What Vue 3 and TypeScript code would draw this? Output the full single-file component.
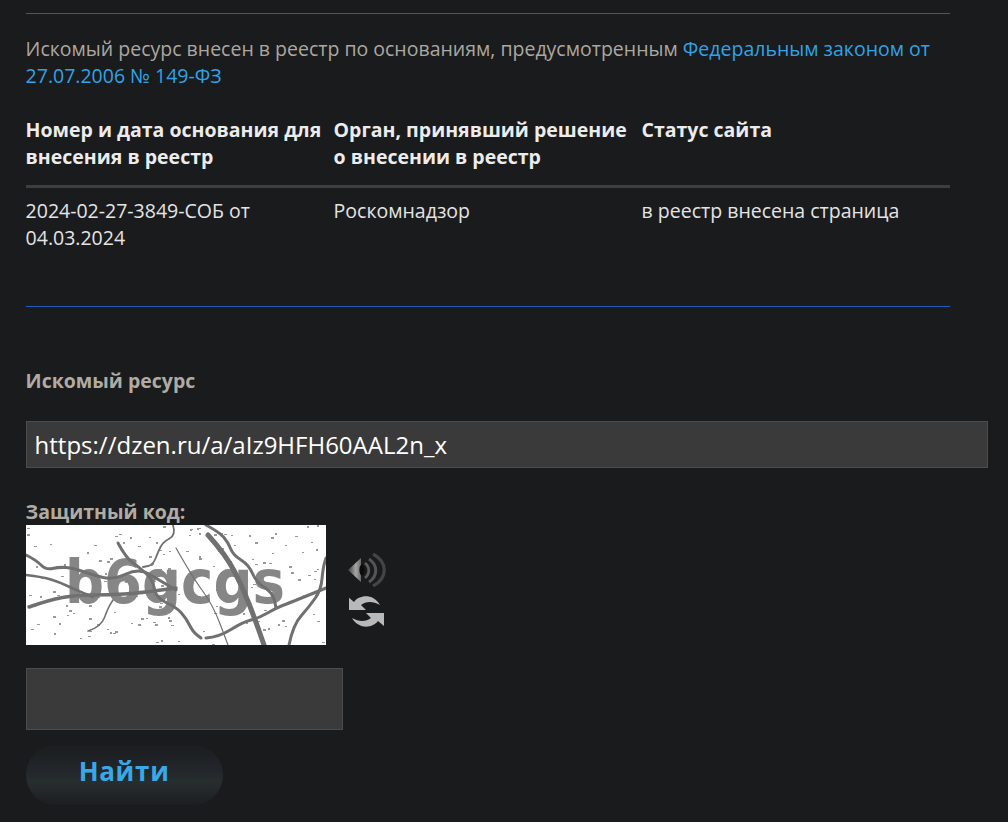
<script setup lang="ts">
import { ref } from 'vue';

type Point = [number, number];

interface Speck {
  x: number;
  y: number;
  w: number;
  h: number;
}

const resource = ref('https://dzen.ru/a/aIz9HFH60AAL2n_x');
const code = ref('');

// captcha noise, seeded so every render looks the same
let seed = 7;
const rnd = () => {
  seed += 1;
  const v = Math.sin(seed * 127.1) * 43758.5453;
  return v - Math.floor(v);
};
const specks: Speck[] = Array.from({ length: 170 }, () => ({
  x: Math.floor(rnd() * 300),
  y: Math.floor(rnd() * 120),
  w: 2 + Math.floor(rnd() * 2),
  h: 1 + Math.floor(rnd() * 2),
}));

// rounds the corners of a hand-traced curve
const smooth = (pts: Point[]) => {
  let d = `M${pts[0][0]} ${pts[0][1]}`;
  for (let i = 1; i < pts.length - 1; i++) {
    const mx = (pts[i][0] + pts[i + 1][0]) / 2;
    const my = (pts[i][1] + pts[i + 1][1]) / 2;
    d += `Q${pts[i][0]} ${pts[i][1]} ${mx} ${my}`;
  }
  const last = pts[pts.length - 1];
  return `${d}L${last[0]} ${last[1]}`;
};

const lines = [
  { w: 3, pts: [[0, 30], [10, 35], [20, 45], [33, 42], [47, 43], [67, 50], [87, 55], [113, 43], [133, 55], [150, 65]] },
  { w: 2.5, pts: [[0, 50], [17, 52], [33, 57], [50, 65], [67, 72]] },
  { w: 3.5, pts: [[3, 82], [23, 75], [50, 70], [83, 70], [113, 68], [150, 63]] },
  { w: 3, pts: [[92, 18], [100, 33], [113, 42], [127, 55], [130, 73], [150, 82], [160, 93], [167, 107], [175, 113]] },
  { w: 1.5, pts: [[62, 106], [75, 102], [82, 83], [87, 75]] },
  { w: 1.8, pts: [[147, 0], [150, 10], [137, 17], [132, 27], [127, 40], [117, 42]] },
  { w: 5, pts: [[182, 10], [200, 30], [217, 63], [230, 97], [238, 120]] },
  { w: 3, pts: [[180, 0], [193, 7], [202, 17], [207, 30], [223, 40], [230, 57], [247, 68], [250, 83]] },
  { w: 1.2, pts: [[150, 23], [167, 53], [187, 80], [202, 120]] },
  { w: 3, pts: [[180, 113], [193, 112], [217, 97], [233, 93], [250, 83], [263, 78], [283, 70], [300, 63]] },
  { w: 3, pts: [[263, 120], [267, 100], [283, 82], [295, 65], [297, 43], [300, 33]] },
].map((l) => ({ w: l.w, d: smooth(l.pts as Point[]) }));
</script>

<template>
  <main class="page">
    <hr class="rule" />

    <p class="intro">
      Искомый ресурс внесен в реестр по основаниям, предусмотренным
      <a href="#" class="link">Федеральным законом от 27.07.2006 № 149-ФЗ</a>
    </p>

    <table class="result">
      <thead>
        <tr>
          <th>Номер и дата основания для внесения в реестр</th>
          <th>Орган, принявший решение о внесении в реестр</th>
          <th>Статус сайта</th>
        </tr>
      </thead>
      <tbody>
        <tr>
          <td>2024-02-27-3849-СОБ от 04.03.2024</td>
          <td>Роскомнадзор</td>
          <td>в реестр внесена страница</td>
        </tr>
      </tbody>
    </table>

    <hr class="rule" />

    <form class="search" @submit.prevent>
      <label class="label" for="resource">Искомый ресурс</label>
      <input id="resource" v-model="resource" class="field field-wide" type="text" />

      <label class="label label-code" for="code">Защитный код:</label>
      <div class="captcha-row">
        <svg class="captcha" viewBox="0 0 300 120" width="300" height="120">
          <rect width="300" height="120" fill="#fff" />
          <g class="captcha-noise">
            <rect
              v-for="(s, i) in specks"
              :key="i"
              :x="s.x"
              :y="s.y"
              :width="s.w"
              :height="s.h"
              fill="#999"
            />
            <text x="39" y="78" class="captcha-word" textLength="220" lengthAdjust="spacingAndGlyphs">b6gcgs</text>
            <path
              v-for="(line, i) in lines"
              :key="'l' + i"
              :d="line.d"
              :stroke-width="line.w"
              fill="none"
              stroke="#707070"
              stroke-linecap="round"
              stroke-linejoin="round"
            />
          </g>
        </svg>

        <div class="captcha-tools">
          <svg class="tool" viewBox="0 0 40 34" width="40" height="34" aria-label="Прослушать">
            <defs>
              <linearGradient id="cone" x1="0" y1="0" x2="1" y2="0">
                <stop offset="0" stop-color="#3c3c3c" />
                <stop offset="0.6" stop-color="#a6a6a6" />
                <stop offset="1" stop-color="#6a6a6a" />
              </linearGradient>
            </defs>
            <path d="M1 17 L14 5 V29 Z" fill="url(#cone)" />
            <ellipse cx="15" cy="17" rx="2.6" ry="5.5" fill="#0c0c0c" />
            <path d="M18 10C23 14 23 21 18 25" fill="none" stroke="#5f5f5f" stroke-width="2.6" />
            <path d="M22 6C31 12 31 23 22 29" fill="none" stroke="#555" stroke-width="3" />
            <path d="M26 1C41 9 41 25 26 33" fill="none" stroke="#454545" stroke-width="3.2" />
          </svg>
          <svg class="tool" viewBox="4 3 36 36" width="36" height="36" aria-label="Обновить">
            <path d="M3 7 L9 12 C14 5 28 3 35 15 C28 11 21 11 16 15 L21 20 H3 Z" fill="#b9b9b9" />
            <path d="M3 7 L9 12 C14 5 28 3 35 15 C28 11 21 11 16 15 L21 20 H3 Z" fill="#b9b9b9" transform="rotate(180 21 21.5)" />
          </svg>
        </div>
      </div>

      <input id="code" v-model="code" class="field field-code" type="text" />

      <button class="submit" type="submit">Найти</button>
    </form>
  </main>
</template>

<style>
html,
body {
  background: #1a1b1d;
}
</style>

<style scoped>
.page {
  box-sizing: border-box;
  width: 1008px;
  height: 822px;
  overflow: hidden;
  padding: 13px 0 0 25.6px;
  font-family: "Open Sans", "Noto Sans", sans-serif;
  font-size: 19.5px;
  line-height: 27px;
  color: #e4e4e4;
  background: #1a1b1d;
}

.rule {
  width: 924px;
  height: 1px;
  margin: 0;
  border: 0;
  background: #1f5fbb;
}

.intro {
  width: 924px;
  margin: 21px 0 0;
  color: #aca8a0;
}

.link {
  color: #2fa3e6;
  text-decoration: none;
}

.result {
  width: 924px;
  margin-top: 27px;
  border-collapse: collapse;
  table-layout: fixed;
}

.result th,
.result td {
  padding: 0 12px 0 0;
  text-align: left;
  vertical-align: top;
}

.result th {
  padding-bottom: 15px;
  border-bottom: 3px solid #3d3e40;
  font-weight: 700;
  color: #ececec;
}

.result td {
  padding-top: 9px;
  padding-bottom: 55px;
  color: #e4e4e4;
}

.search {
  display: flex;
  flex-direction: column;
  align-items: flex-start;
}

.label {
  font-weight: 700;
  color: #b1aca3;
}

.search > .label:first-child {
  margin-top: 60px;
}

.label-code {
  margin-top: 30px;
  line-height: 27px;
  height: 27px;
}

.field {
  box-sizing: border-box;
  border: 1px solid #4c4c4c;
  background: #3a3a3a;
  color: #fff;
  font-family: inherit;
  outline: none;
}

.field-wide {
  width: 962px;
  height: 47px;
  margin-top: 27px;
  padding: 0 8px;
  font-size: 24px;
}

.field-code {
  width: 317px;
  height: 62px;
  margin-top: 23px;
}

.captcha-row {
  display: flex;
  align-items: flex-start;
  gap: 21px;
}

.captcha {
  display: block;
}

.captcha-noise {
  filter: blur(0.4px);
}

.captcha-word {
  font-family: "DejaVu Sans", sans-serif;
  font-size: 60px;
  font-weight: 700;
  fill: #868686;
}

.captcha-tools {
  display: flex;
  flex-direction: column;
  align-items: center;
  gap: 6px;
  padding-top: 28px;
}

.tool {
  display: block;
}

.submit {
  width: 197px;
  height: 60px;
  margin-top: 15px;
  border: 0;
  border-radius: 30px;
  background: linear-gradient(#1b1d1f 0%, #22262a 40%, #282d30 62%, #1c1e20 100%);
  color: #38a8e6;
  font-family: inherit;
  font-size: 26px;
  font-weight: 700;
  letter-spacing: 0.7px;
  padding: 0 0 8px;
}
</style>
